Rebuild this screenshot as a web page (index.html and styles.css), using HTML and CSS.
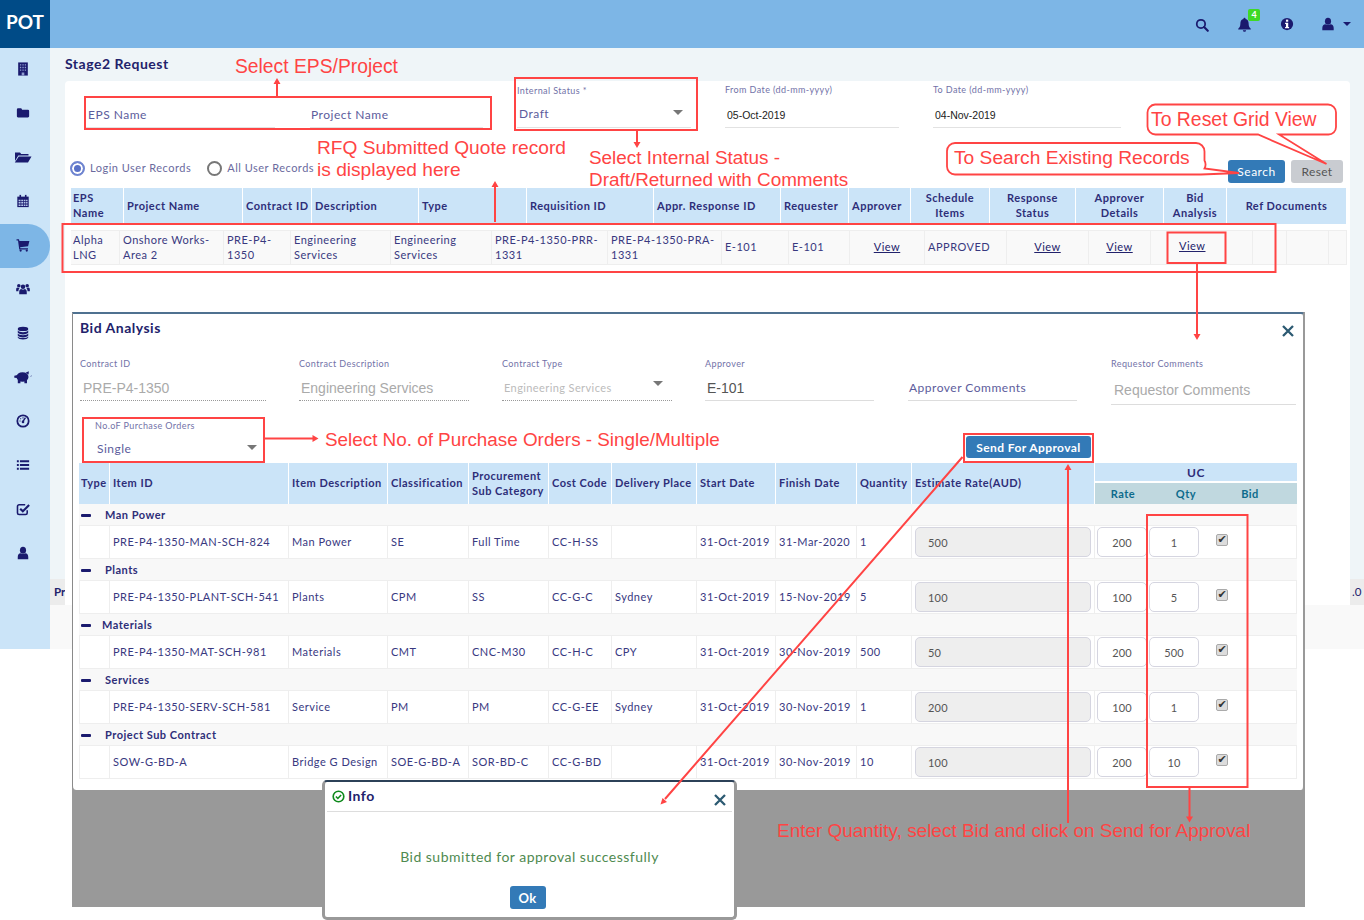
FILE: index.html
```html
<!DOCTYPE html>
<html lang="en">
<head>
<meta charset="utf-8">
<title>Stage2 Request</title>
<link rel="stylesheet" href="styles.css">
</head>
<body>
<div class="app">
  <header class="topbar">
    <div class="logo">POT</div>
    <div class="top-icons">
      <svg class="ti ti-search" viewBox="0 0 16 16"><circle cx="6.8" cy="6.8" r="4.8" fill="none" stroke="currentColor" stroke-width="2"/><path d="M10.4 10.4l4.2 4.2" stroke="currentColor" stroke-width="2.4" stroke-linecap="round"/></svg>
      <span class="ti-bell">
        <svg class="ti" viewBox="0 0 16 16"><path d="M8 .8a1.1 1.1 0 0 1 1.1 1.3C11.4 2.6 12.4 4.5 12.4 7c0 3 .9 4.3 2.3 5.6v.8H1.3v-.8C2.700 11.300 3.600 10 3.600 7c0-2.500 1-4.400 3.300-4.900A1.100 1.100 0 0 1 8 .8zM6.200 14.200h3.600A1.800 1.800 0 0 1 8 15.800a1.800 1.800 0 0 1-1.800-1.600z" fill="currentColor"/></svg>
        <b class="badge">4</b>
      </span>
      <svg class="ti ti-info" viewBox="0 0 16 16"><circle cx="8" cy="8" r="7" fill="currentColor"/><rect x="6.800" y="3" width="2.600" height="2.400" fill="#fff"/><path d="M5.800 6.600h3.600v4.800h1v1.400H5.800v-1.400h1V8H5.800z" fill="#fff"/></svg>
      <svg class="ti ti-user" viewBox="0 0 16 16"><ellipse cx="8" cy="4.800" rx="3.500" ry="4" fill="currentColor"/><path d="M1.500 15v-2.500c0-2.500 1.500-4 3.500-4.200 1.800 1.200 4.200 1.200 6 0 2 .2 3.500 1.700 3.500 4.200V15z" fill="currentColor"/></svg>
      <span class="caret-top"></span>
    </div>
  </header>

  <div class="shell">
    <nav class="sidebar">
      <a class="nav-item"><svg class="ni" viewBox="0 0 16 16"><rect x="2.500" y="0.500" width="11" height="15" fill="currentColor"/><path d="M4.500 2.500h1.500v1.500H4.500zM7.300 2.500h1.500v1.500H7.300zM10 2.500h1.500v1.500H10zM4.500 5.500h1.500V7H4.500zM7.300 5.500h1.500V7H7.300zM10 5.500h1.500V7H10zM4.500 8.500h1.500V10H4.500zM7.300 8.500h1.500V10H7.300zM10 8.500h1.500V10H10zM6.500 12h3v3.500h-3z" fill="#8f9ed0"/></svg></a>
      <a class="nav-item"><svg class="ni" viewBox="0 0 16 16"><path d="M1 4a1.300 1.300 0 0 1 1.300-1.300h3.200c.7 0 1 .4 1.200 1l.2.500h6.800A1.300 1.300 0 0 1 15 5.500v6.200a1.300 1.300 0 0 1-1.300 1.300H2.300A1.300 1.300 0 0 1 1 11.700z" fill="currentColor"/></svg></a>
      <a class="nav-item"><svg class="ni ni-wide" viewBox="0 0 18 16"><path d="M1 3.500h5l1.200 1.500h7.300v1.500H4.300L1 12zM4.800 7.500H17.500L14 13.500H.8z" fill="currentColor"/></svg></a>
      <a class="nav-item"><svg class="ni" viewBox="0 0 16 16"><path d="M1.500 3h13v12h-13z" fill="currentColor"/><rect x="4" y="1" width="1.800" height="3" fill="currentColor"/><rect x="10.200" y="1" width="1.800" height="3" fill="currentColor"/><path d="M3 6.500h2.200v1.700H3zM6 6.500h2v1.700H6zM8.800 6.500h2v1.700h-2zM11.500 6.500h1.700v1.700h-1.700zM3 9.200h2.200v1.700H3zM6 9.200h2v1.700H6zM8.800 9.200h2v1.700h-2zM11.500 9.200h1.700v1.700h-1.700zM3 12h2.200v1.700H3zM6 12h2v1.700H6zM8.800 12h2v1.700h-2zM11.500 12h1.700v1.700h-1.700z" fill="#b6c6ea"/></svg></a>
      <a class="nav-item active"><svg class="ni" viewBox="0 0 16 16"><path d="M.6 1.500h2.800l.5 1.800h11.400l-1.500 6.200-9.100 1 .3 1.200h8.700v1.300H3.700L2.300 2.800H.6z" fill="currentColor"/><circle cx="5.300" cy="14.300" r="1.300" fill="currentColor"/><circle cx="12.300" cy="14.300" r="1.300" fill="currentColor"/></svg></a>
      <a class="nav-item"><svg class="ni" viewBox="0 0 16 16"><circle cx="8" cy="5.500" r="2.600" fill="currentColor"/><circle cx="3.200" cy="4.200" r="2" fill="currentColor"/><circle cx="12.800" cy="4.200" r="2" fill="currentColor"/><path d="M3.700 14v-2.800c0-2 1.200-3 2.300-3.100 1.200.8 2.800.8 4 0 1.100.1 2.300 1.100 2.300 3.100V14z" fill="currentColor"/><path d="M.2 10.500V8.300c0-1.300.7-1.900 1.400-2 .7.500 1.800.6 2.600.2-.6 1-1.400 2-1.400 4zM15.800 10.500V8.300c0-1.300-.7-1.900-1.400-2-.7.500-1.800.6-2.600.2.600 1 1.400 2 1.400 4z" fill="currentColor"/></svg></a>
      <a class="nav-item"><svg class="ni" viewBox="0 0 16 16"><ellipse cx="8" cy="3.300" rx="6" ry="2.500" fill="currentColor"/><path d="M2 5.200c1 1.300 3 1.900 6 1.900s5-.6 6-1.900v2.300c-.5 1.300-3 2.100-6 2.100s-5.500-.8-6-2.100zM2 8.600c1 1.300 3 1.900 6 1.900s5-.6 6-1.900v2.300c-.5 1.300-3 2.100-6 2.100s-5.500-.8-6-2.100z" fill="currentColor"/><path d="M2 11.900c1 1.300 3 1.900 6 1.900s5-.6 6-1.900v1.300c-.5 1.400-3 2.200-6 2.200s-5.500-.8-6-2.200z" fill="currentColor"/></svg></a>
      <a class="nav-item"><svg class="ni ni-wide" viewBox="0 0 18 16"><ellipse cx="8.500" cy="8" rx="6" ry="4.800" fill="currentColor"/><path d="M3.500 9L.3 8.800V6.800L3.600 6zM11.500 3.800l3.300-1.500-.2 3.300zM3.800 11h2.600v3.300H3.800zM10.400 11H13v3.300h-2.600zM16.200 7.500c1 .3 1.500-.3 1.300-1.300" fill="currentColor"/></svg></a>
      <a class="nav-item"><svg class="ni" viewBox="0 0 16 16"><circle cx="8" cy="8" r="6.500" fill="none" stroke="currentColor" stroke-width="2"/><path d="M8 8.500L10.800 4.200" stroke="currentColor" stroke-width="1.600"/><circle cx="8" cy="9" r="1.500" fill="currentColor"/><path d="M4 8h1.200M8 3.800v1.200M5 5l.8.800" stroke="currentColor" stroke-width="1.200"/></svg></a>
      <a class="nav-item"><svg class="ni" viewBox="0 0 16 16"><path d="M1 2.500h2.200v2.300H1zM4.500 2.500H15v2.300H4.500zM1 6.800h2.200v2.300H1zM4.500 6.800H15v2.300H4.500zM1 11.200h2.200v2.300H1zM4.500 11.200H15v2.300H4.500z" fill="currentColor"/></svg></a>
      <a class="nav-item"><svg class="ni" viewBox="0 0 16 16"><path d="M12.800 9.500v3a1.800 1.800 0 0 1-1.800 1.800H3.500a1.800 1.800 0 0 1-1.800-1.800V5a1.800 1.800 0 0 1 1.800-1.800h7" fill="none" stroke="currentColor" stroke-width="1.800"/><path d="M4.800 7.700l3 3L15 3.500" fill="none" stroke="currentColor" stroke-width="2.400"/></svg></a>
      <a class="nav-item"><svg class="ni" viewBox="0 0 16 16"><ellipse cx="8" cy="4.800" rx="3.500" ry="4" fill="currentColor"/><path d="M2 15v-2.500c0-2.500 1.300-4 3.200-4.200 1.700 1.200 3.900 1.200 5.600 0 1.900.2 3.200 1.700 3.200 4.200V15z" fill="currentColor"/></svg></a>
    </nav>

    <main class="main">
      <div class="content">
        <h1 class="page-title">Stage2 Request</h1>
        <section class="card">
          <div class="filters">
            <div class="field f-eps"><span class="val">EPS Name</span></div>
            <div class="field f-proj"><span class="val">Project Name</span></div>
            <div class="field f-status"><label class="lbl">Internal Status <i>*</i></label><span class="val">Draft</span><span class="arrow"></span></div>
            <div class="field f-from"><label class="lbl">From Date (dd-mm-yyyy)</label><span class="val date">05-Oct-2019</span></div>
            <div class="field f-to"><label class="lbl">To Date (dd-mm-yyyy)</label><span class="val date">04-Nov-2019</span></div>
          </div>
          <div class="tools">
            <span class="radio on"></span><span class="rlabel r1">Login User Records</span>
            <span class="radio"></span><span class="rlabel">All User Records</span>
            <span class="spacer"></span>
            <button class="btn primary">Search</button>
            <button class="btn muted">Reset</button>
          </div>
          <table class="grid-head">
            <colgroup><col class="h1"><col class="h2"><col class="h3"><col class="h4"><col class="h5"><col class="h6"><col class="h7"><col class="h8"><col class="h9"><col class="h10"><col class="h11"><col class="h12"><col class="h13"><col class="h14"></colgroup>
            <tr>
              <th>EPS<br>Name</th><th>Project Name</th><th>Contract ID</th><th>Description</th><th>Type</th><th>Requisition ID</th><th>Appr. Response ID</th><th>Requester</th><th>Approver</th>
              <th class="ctr">Schedule<br>Items</th><th class="ctr">Response<br>Status</th><th class="ctr">Approver<br>Details</th><th class="ctr">Bid<br>Analysis</th><th class="ctr">Ref Documents</th>
            </tr>
          </table>
          <table class="grid-body">
            <colgroup><col class="b1"><col class="b2"><col class="b3"><col class="b4"><col class="b5"><col class="b6"><col class="b7"><col class="b8"><col class="b9"><col class="b10"><col class="b11"><col class="b12"><col class="b13"><col class="b14"><col class="b15"><col class="b16"><col class="b17"></colgroup>
            <tr>
              <td>Alpha<br>LNG</td><td>Onshore Works-<br>Area 2</td><td>PRE-P4-<br>1350</td><td>Engineering<br>Services</td><td>Engineering<br>Services</td><td>PRE-P4-1350-PRR-<br>1331</td><td>PRE-P4-1350-PRA-<br>1331</td><td>E-101</td><td>E-101</td>
              <td class="ctr"><a class="link">View</a></td><td>APPROVED</td><td class="ctr"><a class="link">View</a></td><td class="ctr"><a class="link">View</a></td><td class="bid-view"><a class="link">View</a></td><td></td><td></td><td></td>
            </tr>
          </table>
        </section>
      </div>
      <div class="foot-strip"><b class="fs-left">Pr</b><span class="fs-mid"></span><span class="fs-right">.0</span></div>
      <div class="foot-tail"></div>
    </main>
  </div>

  <div class="backdrop">
    <section class="modal">
      <div class="m-head"><h2>Bid Analysis</h2><svg class="m-close" viewBox="0 0 12 12"><path d="M1 1l10 10M11 1L1 11" stroke="currentColor" stroke-width="2.300" fill="none"/></svg></div>
      <div class="m-form">
        <div class="mf mf1"><label class="lbl">Contract ID</label><span class="mv big">PRE-P4-1350</span></div>
        <div class="mf mf2"><label class="lbl">Contract Description</label><span class="mv big">Engineering Services</span></div>
        <div class="mf mf3"><label class="lbl">Contract Type</label><span class="mv small">Engineering Services</span><span class="arrow"></span></div>
        <div class="mf mf4 solid"><label class="lbl">Approver</label><span class="mv big dark">E-101</span></div>
        <div class="mf mf5 solid"><label class="lbl">&nbsp;</label><span class="mv txt">Approver Comments</span></div>
        <div class="mf mf6 solid"><label class="lbl">Requestor Comments</label><span class="mv big">Requestor Comments</span></div>
      </div>
      <div class="m-actions">
        <div class="po"><label class="lbl">No.oF Purchase Orders</label><span class="po-val">Single</span><span class="arrow"></span></div>
        <button class="btn primary send">Send For Approval</button>
      </div>
      <table class="bid">
        <colgroup><col class="t1"><col class="t2"><col class="t3"><col class="t4"><col class="t5"><col class="t6"><col class="t7"><col class="t8"><col class="t9"><col class="t10"><col class="t11"><col class="t12"><col class="t13"><col class="t14"></colgroup>
        <thead>
          <tr class="r-a">
            <th rowspan="2">Type</th><th rowspan="2">Item ID</th><th rowspan="2">Item Description</th><th rowspan="2">Classification</th><th rowspan="2">Procurement<br>Sub Category</th><th rowspan="2">Cost Code</th><th rowspan="2">Delivery Place</th><th rowspan="2">Start Date</th><th rowspan="2">Finish Date</th><th rowspan="2">Quantity</th><th rowspan="2">Estimate Rate(AUD)</th>
            <th colspan="3" class="ctr uc">UC</th>
          </tr>
          <tr class="r-b"><th colspan="3" class="sub"><div class="sub-grid"><span>Rate</span><span>Qty</span><span>Bid</span></div></th></tr>
        </thead>
        <tbody>
          <tr class="group"><td colspan="14"><span class="minus"></span><span class="gname">Man Power</span></td></tr>
          <tr class="item"><td></td><td>PRE-P4-1350-MAN-SCH-824</td><td>Man Power</td><td>SE</td><td>Full Time</td><td>CC-H-SS</td><td></td><td>31-Oct-2019</td><td>31-Mar-2020</td><td>1</td><td class="est"><span class="inp ro">500</span></td><td class="uc-c"><span class="inp num">200</span></td><td class="uc-c qty"><span class="inp num">1</span></td><td class="uc-b"><span class="cb">✔</span></td></tr>
          <tr class="group"><td colspan="14"><span class="minus"></span><span class="gname">Plants</span></td></tr>
          <tr class="item"><td></td><td>PRE-P4-1350-PLANT-SCH-541</td><td>Plants</td><td>CPM</td><td>SS</td><td>CC-G-C</td><td>Sydney</td><td>31-Oct-2019</td><td>15-Nov-2019</td><td>5</td><td class="est"><span class="inp ro">100</span></td><td class="uc-c"><span class="inp num">100</span></td><td class="uc-c qty"><span class="inp num">5</span></td><td class="uc-b"><span class="cb">✔</span></td></tr>
          <tr class="group"><td colspan="14"><span class="minus"></span><span class="gname near">Materials</span></td></tr>
          <tr class="item"><td></td><td>PRE-P4-1350-MAT-SCH-981</td><td>Materials</td><td>CMT</td><td>CNC-M30</td><td>CC-H-C</td><td>CPY</td><td>31-Oct-2019</td><td>30-Nov-2019</td><td>500</td><td class="est"><span class="inp ro">50</span></td><td class="uc-c"><span class="inp num">200</span></td><td class="uc-c qty"><span class="inp num">500</span></td><td class="uc-b"><span class="cb">✔</span></td></tr>
          <tr class="group"><td colspan="14"><span class="minus"></span><span class="gname">Services</span></td></tr>
          <tr class="item"><td></td><td>PRE-P4-1350-SERV-SCH-581</td><td>Service</td><td>PM</td><td>PM</td><td>CC-G-EE</td><td>Sydney</td><td>31-Oct-2019</td><td>30-Nov-2019</td><td>1</td><td class="est"><span class="inp ro">200</span></td><td class="uc-c"><span class="inp num">100</span></td><td class="uc-c qty"><span class="inp num">1</span></td><td class="uc-b"><span class="cb">✔</span></td></tr>
          <tr class="group"><td colspan="14"><span class="minus"></span><span class="gname">Project Sub Contract</span></td></tr>
          <tr class="item"><td></td><td>SOW-G-BD-A</td><td>Bridge G Design</td><td>SOE-G-BD-A</td><td>SOR-BD-C</td><td>CC-G-BD</td><td></td><td>31-Oct-2019</td><td>30-Nov-2019</td><td>10</td><td class="est"><span class="inp ro">100</span></td><td class="uc-c"><span class="inp num">200</span></td><td class="uc-c qty"><span class="inp num">10</span></td><td class="uc-b"><span class="cb">✔</span></td></tr>
        </tbody>
      </table>
    </section>
  </div>

  <section class="info">
    <div class="info-head">
      <svg class="info-ok" viewBox="0 0 12 12"><circle cx="6" cy="6" r="4.900" fill="none" stroke="#0f8a1c" stroke-width="1.500"/><path d="M3.600 6l1.800 1.800 3-3.200" fill="none" stroke="#0f8a1c" stroke-width="1.500"/></svg>
      <h3>Info</h3>
      <svg class="info-close" viewBox="0 0 12 12"><path d="M1 1l10 10M11 1L1 11" stroke="currentColor" stroke-width="2.300" fill="none"/></svg>
    </div>
    <p class="info-msg">Bid submitted for approval successfully</p>
    <button class="btn primary ok">Ok</button>
  </section>

  <svg class="marks" viewBox="0 0 1364 920">
    <g fill="none" stroke="#ff4444" stroke-width="2">
      <rect x="85" y="97" width="406" height="32"/>
      <rect x="515" y="78" width="182" height="52"/>
      <rect x="62.500" y="224" width="1213" height="48"/>
      <rect x="1167.500" y="232.500" width="58" height="30.500"/>
      <rect x="83" y="418" width="181" height="44"/>
      <rect x="964" y="434" width="129" height="28"/>
      <rect x="1147" y="515" width="100.500" height="272"/>
      <path d="M1155 104.500h173a8 8 0 0 1 8 8v14.500a7.500 7.500 0 0 1-7.500 7.500H1279L1326.500 164 1258 134.500h-102.500a8 8 0 0 1-8-8v-14a8 8 0 0 1 7.500-8z" stroke-width="1.800"/>
      <path d="M955 143h241a8.500 8.500 0 0 1 8.500 8.500v9a8.500 8.500 0 0 1 0 8L1239 173 1201 174.500H955a8 8 0 0 1-8-8v-15.500a8 8 0 0 1 8-8z" stroke-width="1.800"/>
      <path d="M277 96V83M637 130v14M495 222V186M1197 264v72M264 438.500h50M1068 823V470M1189.500 787v31M962.500 457L665 799"/>
    </g>
    <g fill="#ff4444">
      <path d="M277 78l3.500 6h-7zM637 148l-3.500-6h7zM495 181l3.500 6h-7zM1197 340l-3.500-6h7zM318.500 438.500l-6-3.500v7zM1068 464l3.500 6h-7zM1189.500 822.500l-3.500-6h7zM660.500 804.500l2-6.500 4.500 4z"/>
    </g>
  </svg>

  <span class="note n1">Select EPS/Project</span>
  <span class="note n2">RFQ Submitted Quote record<br>is displayed here</span>
  <span class="note n3">Select Internal Status -<br>Draft/Returned with Comments</span>
  <span class="note n4">To Reset Grid View</span>
  <span class="note n5">To Search Existing Records</span>
  <span class="note n6">Select No. of Purchase Orders - Single/Multiple</span>
  <span class="note n7">Enter Quantity, select Bid and click on Send for Approval</span>
</div>
</body>
</html>
```
FILE: styles.css
```css
* { box-sizing: border-box; }
html, body { margin: 0; padding: 0; background: #fff; }
body { font-family: Lato, "Open Sans", sans-serif; font-size: 11px; color: #38387f; letter-spacing: .5px; }
.app { position: relative; width: 1364px; height: 920px; overflow: hidden; }

/* top bar */
.topbar { display: flex; height: 48px; background: #7db6e6; }
.logo { width: 50px; background: #004b87; color: #fff; font-size: 19px; font-weight: 700; letter-spacing: 0; line-height: 44px; text-align: center; }
.top-icons { margin-left: auto; display: flex; align-items: center; color: #1a1a6e; padding-right: 13px; }
.ti { display: block; width: 15px; height: 15px; }
.ti-search { width: 14px; height: 14px; margin-right: 28px; margin-top: 2px; }
.ti-bell { position: relative; display: block; margin-right: 28px; margin-top: 1px; }
.ti-info { width: 14px; height: 14px; margin-right: 27px; }
.ti-user { width: 14px; height: 14px; }
.badge { position: absolute; left: 11px; top: -8px; width: 12px; height: 12px; background: #3fd925; border-radius: 2px; color: #fff; font-size: 9px; line-height: 12px; text-align: center; letter-spacing: 0; }
.caret-top { width: 0; height: 0; border: 4px solid transparent; border-top-color: #1a1a6e; border-bottom: 0; margin-left: 8px; }

/* shell */
.shell { display: flex; height: 601px; }
.sidebar { width: 50px; background: #cbe4f8; color: #1a1a6e; flex: none; }
.nav-item { display: flex; align-items: center; justify-content: center; height: 44px; width: 50px; padding: 0 4px 2px 0; }
.nav-item.active { background: #7db6e6; border-radius: 0 22px 22px 0; }
.ni { width: 14px; height: 14px; display: block; }
.ni-wide { width: 18px; height: 16px; }

.main { flex: 1; display: flex; flex-direction: column; background: #eff5f8; }
.content { flex: 1; padding: 0 14px 0 15px; }
.page-title { margin: 0; height: 33px; font-size: 14px; line-height: 32px; font-weight: 700; color: #22226b; letter-spacing: .5px; }
.card { height: 498px; background: #fff; border-radius: 4px 4px 0 0; padding: 3px 3px 0 6px; }
.foot-strip { height: 26px; flex: none; display: flex; font-size: 11.500px; line-height: 26px; color: #22226b; letter-spacing: 0; }
.fs-left { width: 15px; background: #ececec; padding-left: 4px; white-space: nowrap; }
.fs-mid { flex: 1; background: #fff; }
.fs-right { width: 14px; background: #ececec; padding-left: 2px; }
.foot-tail { height: 44px; flex: none; background: #f9f9f9; }

/* filters */
.filters { display: flex; height: 44px; }
.field { position: relative; border-bottom: 1px solid #e2e2e2; height: 44px; flex: none; }
.lbl { display: block; font-size: 9px; line-height: 12px; color: #7272a8; letter-spacing: .4px; white-space: nowrap; }
.lbl i { font-style: normal; }
.val { position: absolute; left: 2px; top: 23px; font-size: 12px; line-height: 15px; color: #5c5c9c; white-space: nowrap; }
.val.date { font-family: "Liberation Sans", sans-serif; font-size: 10.500px; color: #222; letter-spacing: 0; left: 2px; top: 24px; }
.f-eps { width: 189px; margin-left: 15px; }
.f-proj { width: 173px; margin-left: 35px; }
.f-proj .val { left: 1px; }
.f-status { width: 174px; margin-left: 34px; }
.f-status .lbl { padding-top: 1px; }
.f-status .val { top: 22px; }
.f-from { width: 174px; margin-left: 34px; }
.f-to { width: 188px; margin-left: 34px; }
.arrow { position: absolute; width: 0; height: 0; border: 5px solid transparent; border-top: 5px solid #777; border-bottom: 0; }
.f-status .arrow { right: 8px; top: 26px; }

.tools { display: flex; align-items: flex-start; height: 23px; margin-top: 32px; padding-right: 4px; }
.radio { width: 15px; height: 15px; border: 2px solid #777; border-radius: 50%; flex: none; margin: 1px 5px 0 0; }
.radio.on { border-color: #6f85d0; background: #5a72c8; box-shadow: inset 0 0 0 2px #fff; margin-left: -1px; }
.rlabel { font-size: 11px; line-height: 16px; color: #6a6a9e; white-space: nowrap; }
.r1 { margin-right: 16px; }
.spacer { flex: 1; }
.btn { border: 0; font-family: Lato, sans-serif; font-size: 12px; height: 23px; border-radius: 3px; letter-spacing: .3px; padding: 0; }
.btn.primary { background: #337ab7; color: #fff; }
.btn.muted { background: #c9ccd1; color: #555; }
.tools .btn.primary { width: 57px; margin-right: 6px; letter-spacing: .5px; }
.tools .btn.muted { width: 52px; }

/* outer grid */
table { border-collapse: separate; border-spacing: 0; table-layout: fixed; }
.grid-head { width: 1276px; margin-top: 5px; background: #cbe4f8; }
.grid-head th { height: 36px; padding: 0 3px 2px; text-align: left; font-size: 11px; line-height: 15px; font-weight: 700; color: #2e2e78; border-right: 1px solid #fff; white-space: nowrap; }
.grid-head th:first-child { padding-left: 2px; }
th.ctr { text-align: center; }
.h1 { width: 53px; } .h2 { width: 119px; } .h3 { width: 69px; } .h4 { width: 107px; } .h5 { width: 108px; } .h6 { width: 127px; } .h7 { width: 127px; } .h8 { width: 68px; } .h9 { width: 62px; } .h10 { width: 79px; } .h11 { width: 86px; } .h12 { width: 88px; } .h13 { width: 63px; } .h14 { width: 120px; }

.grid-body { width: 1276px; margin-top: 6px; background: #f9f9f9; }
.grid-body td { height: 35px; padding: 0 3px 2px; font-size: 11px; line-height: 15px; color: #38387f; border-right: 1px solid #eee; border-top: 1px solid #eee; border-bottom: 1px solid #eee; white-space: nowrap; }
.grid-body td:first-child { padding-left: 2px; }
.grid-body td.ctr { text-align: center; }
.link { color: #22226b; text-decoration: underline; }
.grid-body .bid-view { padding-left: 28px; padding-bottom: 4px; }
.b1 { width: 49px; } .b2 { width: 104px; } .b3 { width: 67px; } .b4 { width: 100px; } .b5 { width: 101px; } .b6 { width: 116px; } .b7 { width: 114px; } .b8 { width: 67px; } .b9 { width: 61px; } .b10 { width: 75px; } .b11 { width: 82px; } .b12 { width: 82px; } .b13 { width: 62px; } .b14 { width: 102px; } .b15 { width: 34px; } .b16 { width: 42px; } .b17 { width: 18px; }

/* backdrop + modal */
.backdrop { position: absolute; left: 72px; top: 312px; width: 1233px; height: 595px; background: #999; }
.modal { height: 478px; background: #fff; border-top: 2px solid #4f7190; border-left: 1px solid #8a8a8a; border-right: 2px solid #999; border-radius: 0 4px 4px 4px; }
.m-head { height: 44px; position: relative; padding: 4px 0 0 7px; }
.m-head h2 { margin: 0; font-size: 14px; line-height: 20px; font-weight: 700; color: #22226b; letter-spacing: .5px; }
.m-close { position: absolute; right: 9px; top: 11px; width: 12px; height: 12px; color: #2c5a72; }
.m-form { display: flex; padding-left: 7px; height: 59px; }
.mf { position: relative; flex: none; height: 43px; border-bottom: 1px dotted #999; margin-right: 33px; }
.mf.solid { border-bottom: 1px solid #ddd; }
.mf1 { width: 186px; } .mf2 { width: 170px; } .mf3 { width: 170px; } .mf4 { width: 169px; margin-right: 34px; } .mf5 { width: 169px; margin-right: 34px; } .mf6 { width: 185px; height: 47px; margin-right: 0; }
.mv { position: absolute; left: 2px; top: 20px; line-height: 20px; white-space: nowrap; font-family: "Liberation Sans", sans-serif; letter-spacing: 0; color: #aaa; }
.mv.big { font-size: 14px; }
.mf1 .mv { left: 3px; }
.mf6 .mv { top: 22px; left: 3px; }
.mv.small { font-family: Lato, sans-serif; font-size: 11px; color: #bbb; letter-spacing: .4px; }
.mv.dark { color: #555; }
.mv.txt { font-family: Lato, sans-serif; font-size: 12px; letter-spacing: .5px; color: #5c5c9c; left: 1px; }
.mf3 .arrow { right: 9px; top: 23px; }
.m-actions { display: flex; justify-content: space-between; height: 46px; padding-left: 10px; padding-right: 212px; }
.po { position: relative; width: 181px; height: 46px; padding: 3px 0 0 12px; }
.po-val { display: block; margin: 9px 0 0 2px; font-size: 12px; color: #5c5c9c; line-height: 15px; }
.po .arrow { right: 7px; top: 28px; }
.btn.send { width: 125px; height: 22px; margin-top: 19px; font-weight: 700; letter-spacing: .4px; }

/* bid table */
.bid { width: 1218px; margin-left: 6px; }
.t1 { width: 31px; } .t2 { width: 179px; } .t3 { width: 99px; } .t4 { width: 81px; } .t5 { width: 80px; } .t6 { width: 63px; } .t7 { width: 85px; } .t8 { width: 79px; } .t9 { width: 81px; } .t10 { width: 55px; } .t11 { width: 183px; } .t12 { width: 53px; } .t13 { width: 53px; } .t14 { width: 96px; }
.bid th { background: #cbe4f8; padding: 0 3px 2px; text-align: left; font-size: 11px; line-height: 15px; font-weight: 700; color: #2e2e78; border-right: 1px solid #fff; white-space: nowrap; }
.bid th:first-child { padding-left: 2px; }
.r-a th { height: 20px; }
.r-b th { height: 21px; }
.bid th.uc { text-align: center; border-bottom: 2px solid #fff; border-right: 0; font-size: 12px; padding-bottom: 0; }
.bid th.sub { background: #c0d8df; color: #0d6b8c; padding: 0; border-right: 0; }
.sub-grid { display: grid; grid-template-columns: 56px 70px 58px; text-align: center; }
.group td { height: 22px; background: #f8f8f8; border-bottom: 1px solid #eee; padding: 0 0 0 2px; font-weight: 700; color: #2e2e78; }
.minus { display: inline-block; width: 10px; height: 3px; background: #1a1a6e; border-radius: 1px; vertical-align: middle; margin-right: 14px; position: relative; top: -1px; }
.gname.near { margin-left: -3px; }
.item td { height: 33px; padding: 0 3px 2px; color: #38387f; background: #fff; border-right: 1px solid #eee; border-bottom: 1px solid #eee; white-space: nowrap; }
.item td:first-child { border-left: 1px solid #eee; }
.item .est { padding: 0 3px 0 3px; }
.item td.uc-c { border-right: 0; padding: 0 2px; }
.item td.qty { padding-left: 1px; }
.item td.uc-b { vertical-align: top; padding: 8px 0 0 15px; }
.inp { display: block; height: 30px; border: 1px solid #d5d5e0; border-radius: 5px; font-size: 11px; line-height: 29px; color: #555; letter-spacing: .2px; background: #fff; }
.inp.ro { background: #eee; padding-left: 12px; }
.inp.num { text-align: center; }
.uc-c .inp { width: 50px; }
.cb { display: block; width: 12px; height: 12px; background: #dcdcdc; border: 1px solid #aaa; border-radius: 2px; font-family: "DejaVu Sans", sans-serif; font-size: 11px; line-height: 10px; text-align: center; color: #333; letter-spacing: 0; }

/* info dialog */
.info { position: absolute; left: 322px; top: 780px; width: 415px; height: 140px; background: #fff; border: 3px solid #999; border-top: 2px solid #2c4158; border-radius: 5px; text-align: center; }
.info-head { position: relative; display: flex; align-items: center; height: 30px; margin: 0 2px; border-bottom: 1px solid #ddd; padding-left: 5px; }
.info-ok { width: 13px; height: 13px; flex: none; margin-right: 3px; }
.info-head h3 { margin: 0; font-size: 14px; line-height: 28px; font-weight: 700; color: #22226b; padding-bottom: 2px; }
.info-close { position: absolute; right: 6px; top: 12px; width: 12px; height: 12px; color: #2c5a72; }
.info-msg { margin: 36px 0 0; font-size: 14px; line-height: 18px; color: #4f8a50; }
.btn.ok { display: block; width: 36px; height: 23px; margin: 20px auto 0; font-weight: 700; font-size: 13px; position: relative; left: -2px; }

/* callouts drawn over the screenshot */
.marks { position: absolute; left: 0; top: 0; width: 1364px; height: 920px; pointer-events: none; }
.note { position: absolute; font-family: "Liberation Sans", Arial, sans-serif; font-size: 19px; line-height: 22px; color: #ff4444; letter-spacing: 0; white-space: nowrap; }
.n1 { left: 235px; top: 56px; font-size: 19.300px; }
.n2 { left: 317px; top: 137px; font-size: 19.150px; }
.n3 { left: 589px; top: 147px; font-size: 18.900px; }
.n4 { left: 1151px; top: 108px; font-size: 19.400px; }
.n5 { left: 954px; top: 147px; font-size: 19.200px; }
.n6 { left: 325px; top: 429px; font-size: 18.850px; }
.n7 { left: 777px; top: 820px; font-size: 18.950px; }
```
